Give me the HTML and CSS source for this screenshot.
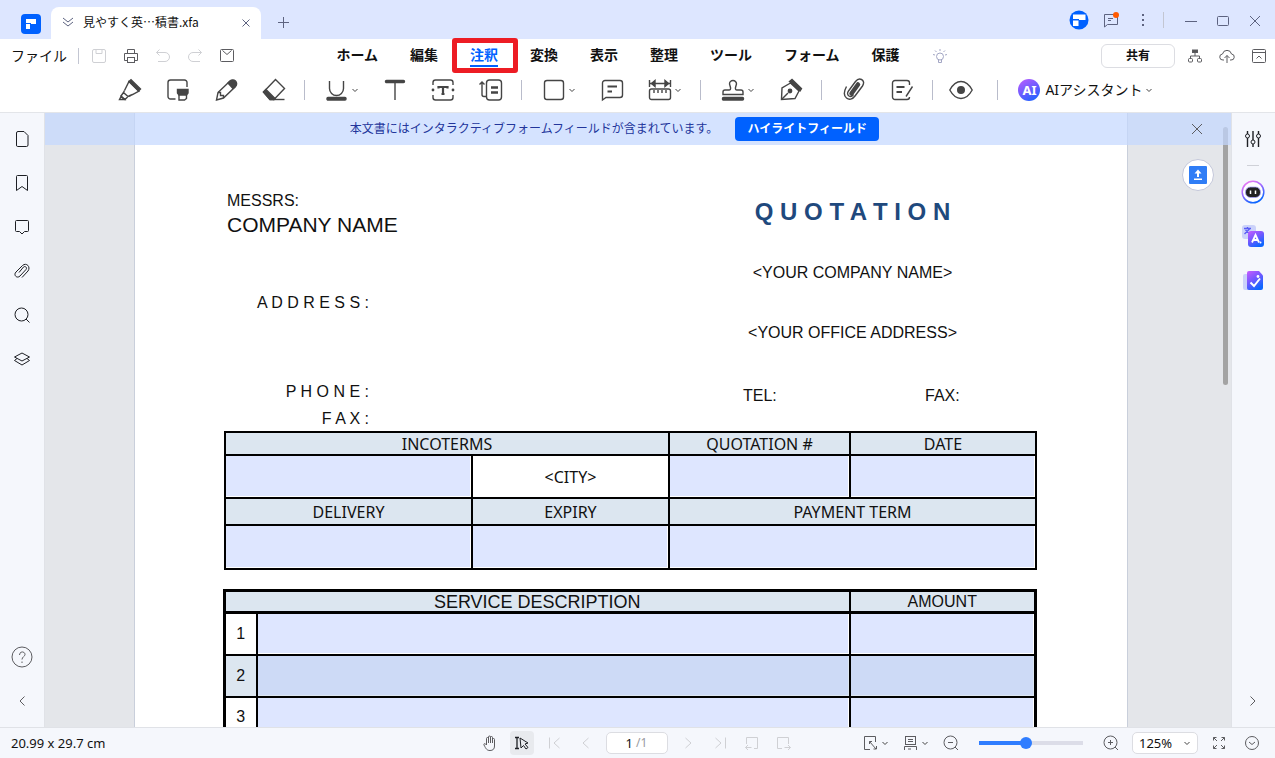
FILE: index.html
```html
<!DOCTYPE html>
<html lang="ja">
<head>
<meta charset="utf-8">
<meta name="viewport" content="width=device-width, initial-scale=1">
<title>見やすく英…積書.xfa</title>
<link rel="stylesheet" href="styles.css">
</head>
<body>
<svg class="sprite" aria-hidden="true">
  <defs>
    <linearGradient id="violet" x1="0" y1="0" x2="0.6" y2="1"><stop offset="0" stop-color="#c85cff"/><stop offset="0.5" stop-color="#7558ff"/><stop offset="1" stop-color="#0d66ff"/></linearGradient>
    <linearGradient id="ring" x1="0" y1="0" x2="0.5" y2="1"><stop offset="0" stop-color="#ff7df0"/><stop offset="0.5" stop-color="#a06aff"/><stop offset="1" stop-color="#0d66ff"/></linearGradient>
    <symbol id="chev" viewBox="0 0 8 8"><path d="M1.500 3 4 5.500 6.500 3"/></symbol>
  </defs>
</svg>

<header class="titlebar">
  <svg class="logo" viewBox="0 0 20 20"><rect width="20" height="20" rx="4" fill="#0061ff"/><path d="M5 5h10v5h-5v-1H5zM5 10h4v5H5z" fill="#fff"/></svg>
  <div class="tab">
    <svg class="ico16 slate" viewBox="0 0 16 16"><path d="M3 4l5 4 5-4M3 8l5 4 5-4"/></svg>
    <span class="tab-name">見やすく英…積書.xfa</span>
    <button class="tab-close" aria-label="閉じる"><svg class="ico16 slate" viewBox="0 0 16 16"><path d="M4.500 5.500l7 7M11.500 5.500l-7 7"/></svg></button>
  </div>
  <button class="newtab" aria-label="新しいタブ"><svg class="ico16 slate" viewBox="0 0 16 16"><path d="M7.500 3v11M2 8.500h11"/></svg></button>
  <div class="window-tools">
    <button aria-label="アカウント"><svg class="ico20" viewBox="0 0 20 20"><circle cx="10" cy="10" r="9.500" fill="#0061ff" stroke="none"/><path d="M4 4.500h12.500v5.500h-6.500V9H4zM4 10.500h5.500V16H4z" fill="#fff" stroke="none"/></svg></button>
    <button aria-label="メッセージ"><svg class="ico20 slate" viewBox="0 0 20 20"><path d="M3.500 4.500h13v10h-10l-3 2.500zM7 8.500h5M7 10.500h3"/><circle cx="15" cy="5" r="3" fill="#ff5a00" stroke="none"/></svg></button>
    <button aria-label="その他"><svg class="ico20" viewBox="0 0 20 20"><path d="M9 4h2v2H9zM9 9h2v2H9zM9 14h2v2H9z" fill="#5d6380" stroke="none"/></svg></button>
    <i class="vline"></i>
    <button aria-label="最小化"><svg class="ico20 slate" viewBox="0 0 20 20"><path d="M4 11.500h12"/></svg></button>
    <button aria-label="最大化"><svg class="ico20 slate" viewBox="0 0 20 20"><rect x="4.500" y="6.500" width="11" height="9" rx="1"/></svg></button>
    <button aria-label="閉じる"><svg class="ico20 slate" viewBox="0 0 20 20"><path d="M5 6l10 10M15 6 5 16"/></svg></button>
  </div>
</header>

<div class="menubar">
  <div class="quick">
    <button class="file">ファイル</button>
    <i class="vline"></i>
    <button aria-label="保存"><svg class="ico16 faint" viewBox="0 0 16 16"><rect x="1.500" y="1.500" width="13" height="13" rx="1.500"/><path d="M5 2v3.500h6V2"/></svg></button>
    <button aria-label="印刷"><svg class="ico16" viewBox="0 0 16 16"><path d="M4.500 5V1.500h7V5M4 12.500H1.500v-7h13v7H12"/><rect x="4.500" y="9.500" width="7" height="5"/></svg></button>
    <button aria-label="元に戻す"><svg class="ico16 faint" viewBox="0 0 16 16"><path d="M4.500 1.500l-3 3 3 3M1.500 4.500H10a4.500 4.500 0 0 1 0 9H3"/></svg></button>
    <button aria-label="やり直し"><svg class="ico16 faint" viewBox="0 0 16 16"><path d="M11.500 1.500l3 3-3 3M14.500 4.500H6a4.500 4.500 0 0 0 0 9h7"/></svg></button>
    <button aria-label="メール"><svg class="ico16" viewBox="0 0 16 16"><rect x="1.500" y="1.500" width="13" height="12" rx="1"/><path d="M3.500 2.500 8 6.500l4.500-4"/></svg></button>
  </div>
  <nav class="menu">
    <a href="#">ホーム</a><a href="#">編集</a><a href="#" class="active">注釈</a><a href="#">変換</a><a href="#">表示</a><a href="#">整理</a><a href="#">ツール</a><a href="#">フォーム</a><a href="#">保護</a>
    <button aria-label="ヒント"><svg class="ico16 bulb" viewBox="0 0 16 16"><circle cx="8" cy="8.500" r="3.500"/><path d="M6.500 11.500v3h3v-3M8 1v2M1 6.500l2 .5M15 6.500l-2 .5M3 2.500 4.500 4M13 2.500 11.500 4"/></svg></button>
  </nav>
  <div class="share-tools">
    <button class="share">共有</button>
    <button aria-label="構成"><svg class="ico16" viewBox="0 0 16 16"><rect x="5.500" y="2" width="5" height="2.500" fill="#555"/><path d="M8 5v3M3.500 10V8h9v2"/><rect x="1.500" y="10.500" width="4" height="3.500" rx="1"/><rect x="10.500" y="10.500" width="4" height="3.500" rx="1"/></svg></button>
    <button aria-label="アップロード"><svg class="ico16" viewBox="0 0 16 16"><path d="M5 12H4a3 3 0 0 1-.5-6 4.600 4.600 0 0 1 9 0 3 3 0 0 1-.5 6h-1M8 15V7.500M5.500 10 8 7.500l2.500 2.500"/></svg></button>
    <button aria-label="折りたたむ"><svg class="ico16" viewBox="0 0 16 16"><rect x="1.500" y="1.500" width="13" height="13" rx="1"/><path d="M1.500 4.500h13M5.500 10.500 8 8l2.500 2.500"/></svg></button>
  </div>
</div>

<div class="toolbar">
  <button aria-label="ハイライト"><svg class="ico24" viewBox="0 0 24 24"><path d="M6.500 12.500 11 3.500 21 13l-6.500 3.500-3.500 1.500"/><path d="M11 3.500 13 1.800 22.500 11l-2 2z" fill="#454545"/><path d="M6.500 12.500 5.500 14.500l4.500 4 2.500-1M5.500 14.500 3 18l4 3.500 3-3"/><path d="M3 18.500 1.500 21.500H6.500z"/></svg></button>
  <button aria-label="エリアハイライト"><svg class="ico24" viewBox="0 0 24 24"><path d="M9.500 21H4.500A2.500 2.500 0 0 1 2 18.500v-14A2.500 2.500 0 0 1 4.500 2h14A2.500 2.500 0 0 1 21 4.500V9"/><path d="M11.500 11.500h10.500v3.500l-1.500 2h-7.500l-1.500-2z" fill="#454545"/><path d="M13 17v5h5.500l2-1.500V17"/></svg></button>
  <button aria-label="鉛筆"><svg class="ico24" viewBox="0 0 24 24"><path d="M4 14.500 15.500 3.500a4 4 0 0 1 5.500 5.500L9.500 20 2.500 22z"/><path d="M14 5l2-2a3.800 3.800 0 0 1 5.500 5.500L19 10.500z" fill="#454545"/><path d="M4 14.500h2.500v3h3V20"/></svg></button>
  <button aria-label="消しゴム"><svg class="ico24" viewBox="0 0 24 24"><path d="M1.500 14 13.500 1.500l9 9L12 21.500H8z"/><path d="M1.500 14 4 11.500l9 9-1 1H8z" fill="#454545"/><path d="M11 21.500h11.500"/></svg></button>
  <i class="vline"></i>
  <button class="drop" aria-label="下線"><svg class="ico24" viewBox="0 0 24 24"><path d="M4.500 3v7.500a7 7 0 0 0 14 0V3"/><rect x="2" y="19.500" width="19" height="2.500" rx="1" fill="#454545"/></svg><svg class="chev"><use href="#chev"/></svg></button>
  <button aria-label="テキスト"><svg class="ico24" viewBox="0 0 24 24"><rect x="2.500" y="2.500" width="19" height="2" rx="1" fill="#454545"/><path d="M12 5v17"/></svg></button>
  <button aria-label="テキストボックス"><svg class="ico24" viewBox="0 0 24 24"><path d="M2 7V4.500A2.500 2.500 0 0 1 4.500 2h15A2.500 2.500 0 0 1 22 4.500V7M2 17v2.500A2.500 2.500 0 0 0 4.500 22h15a2.500 2.500 0 0 0 2.500-2.500V17"/><path d="M7.500 10.500V9h9v1.500M12 9v7M10.500 16h3" stroke-width="2.200"/><circle cx="2" cy="12" r=".7"/><circle cx="22" cy="12" r=".7"/></svg></button>
  <button aria-label="引き出し線"><svg class="ico24" viewBox="0 0 24 24"><rect x="7.500" y="2" width="15" height="20" rx="3"/><path d="M12 9.500h7M12 14.500h7" stroke-width="2.500"/><path d="M3 4v12.500a2 2 0 0 0 2 2h2M0.500 6.500 3 4l2.500 2.500"/></svg></button>
  <i class="vline"></i>
  <button class="drop" aria-label="図形"><svg class="ico24" viewBox="0 0 24 24"><rect x="2.500" y="2.500" width="19" height="19" rx="2.500"/></svg><svg class="chev"><use href="#chev"/></svg></button>
  <button aria-label="ノート"><svg class="ico24" viewBox="0 0 24 24"><path d="M2.500 22V5A2.500 2.500 0 0 1 5 2.500h15A2.500 2.500 0 0 1 22.500 5v12a2.500 2.500 0 0 1-2.500 2.500H6z"/><path d="M7.500 8.500h9.500M7.500 13.500h4.500" stroke-width="2.200"/></svg></button>
  <button class="drop" aria-label="計測"><svg class="ico24" viewBox="0 0 24 24"><rect x="1.500" y="11" width="21" height="10.500" rx="2"/><path d="M6 12v3M10 12v3M14 12v3M18 12v3M1.500 2v7M22.500 2v7M2 5.500h20"/><path d="M3.500 5.500 7 2.500v6zM20.500 5.500 17 2.500v6z" fill="#454545"/></svg><svg class="chev"><use href="#chev"/></svg></button>
  <i class="vline"></i>
  <button class="drop" aria-label="スタンプ"><svg class="ico24" viewBox="0 0 24 24"><path d="M2 16.500V14q0-2 2-2h4q2 0 1.500-2.500L8.500 6a3.500 3.500 0 1 1 7 0l-1 3.500Q14 12 16 12h4q2 0 2 2v2.500z"/><rect x="1.500" y="19.500" width="21" height="2.500" rx="1" fill="#454545"/></svg><svg class="chev"><use href="#chev"/></svg></button>
  <button aria-label="署名"><svg class="ico24" viewBox="0 0 24 24"><path d="M2.500 21.500 3 10l8.500-5L20 13l-4 7.500z"/><path d="M10.500 3.500 13 1.500 22.500 10.500 21 13z" fill="#454545"/><path d="M3 21l6-6"/><circle cx="11" cy="13" r="1.700" fill="#454545"/></svg></button>
  <i class="vline"></i>
  <button aria-label="添付"><svg class="ico24" viewBox="0 0 24 24"><path d="M4.500 8.500C1.500 14 2 18 4.500 20s6 1.500 8.500-2l7.500-10c2-3 1-5.500-1-6.500s-4-.5-6 2L6.500 13c-1.500 2-1 4 .5 5s3 .5 4.500-1.500"/><path d="M9.500 15.500l6.500-9" stroke-width="4.500" stroke-linecap="round"/></svg></button>
  <button aria-label="管理"><svg class="ico24" viewBox="0 0 24 24"><path d="M19.500 7V5A2.500 2.500 0 0 0 17 2.500H5A2.500 2.500 0 0 0 2.500 5v14A2.500 2.500 0 0 0 5 21.500h12a2.500 2.500 0 0 0 2.500-2.500M22.500 8.500 16 18.500"/><path d="M6.500 9h8M6.500 14h5.500" stroke-width="2.200"/></svg></button>
  <i class="vline"></i>
  <button class="view" aria-label="表示"><svg class="ico24" viewBox="0 0 24 24"><path d="M.8 12C3.800 6.500 8 3.500 12 3.500S20.200 6.500 23.200 12c-3 5.500-7.200 8.500-11.200 8.500S3.800 17.500.8 12z"/><circle cx="12" cy="12" r="3.300" fill="#454545"/></svg></button>
  <i class="vline"></i>
  <button class="ai"><span class="ai-badge">AI</span><span class="ai-name">AIアシスタント</span><svg class="chev"><use href="#chev"/></svg></button>
</div>

<div class="workspace">
  <aside class="rail">
    <button aria-label="ページ"><svg class="ico16 dark" viewBox="0 0 16 16"><path d="M4 .5h6l4 4V14q0 1.500-1.500 1.500h-9Q2.500 15.500 2.500 14V2Q2.500.5 4 .5z"/></svg></button>
    <button aria-label="しおり"><svg class="ico16 dark" viewBox="0 0 16 16"><path d="M2.500 15.500V1.500q0-1 1-1h9q1 0 1 1v14L8 11.500z"/></svg></button>
    <button aria-label="コメント"><svg class="ico16 dark" viewBox="0 0 16 16"><path d="M2.500 1.500h11q1 0 1 1v9q0 1-1 1h-3L8 15l-2.500-2.500h-3q-1 0-1-1v-9q0-1 1-1z"/></svg></button>
    <button aria-label="添付"><svg class="ico16 dark" viewBox="0 0 16 16"><path d="M8 14.500l6-6.500c3-4-1.500-9-5.500-5.500L2 9c-3 3 1 7 4 4l6-6.500c1.500-2-.8-3.800-2.500-2.500L5 9.500"/></svg></button>
    <button aria-label="検索"><svg class="ico16 dark" viewBox="0 0 16 16"><circle cx="7.500" cy="7.500" r="6.500"/><path d="M12 12l3.500 3.500"/></svg></button>
    <button aria-label="レイヤー"><svg class="ico16 dark" viewBox="0 0 16 16"><path d="M8 2l7.500 4L8 10 .5 6zM3 7.500.5 9.500 8 14l7.500-4.500-2.500-2"/></svg></button>
    <span class="grow"></span>
    <button class="help" aria-label="ヘルプ"><svg class="ico22" viewBox="0 0 22 22"><circle cx="11" cy="11" r="10"/><path d="M8.500 9c0-4 5.500-4 5.500-.5 0 2-3 2.300-3 5M11 15.500v1.500"/></svg></button>
    <button aria-label="折りたたむ"><svg class="ico16" viewBox="0 0 16 16"><path d="M10.500 3.500 6 8l4.500 4.500"/></svg></button>
  </aside>

  <main class="viewer">
    <div class="banner">
      <span>本文書にはインタラクティブフォームフィールドが含まれています。</span>
      <button class="highlight">ハイライトフィールド</button>
      <button class="banner-close" aria-label="閉じる"><svg class="ico16" viewBox="0 0 16 16"><path d="M3 3l10 10M13 3 3 13"/></svg></button>
    </div>
    <span class="thumb"></span>
    <button class="upload" aria-label="アップロード"><svg viewBox="0 0 18 18"><rect width="18" height="18" rx="1" fill="#2f7df6"/><path d="M9 3.500 5.500 7.500H8V11h2V7.500h2.500zM5 12.500h8V14H5z" fill="#fff"/></svg></button>

    <article class="page">
      <section class="heading">
        <div class="client">
          <p class="messrs">MESSRS:</p>
          <p class="company">COMPANY NAME</p>
          <p class="label address">A D D R E S S :</p>
          <p class="label phone">P H O N E :</p>
          <p class="label fax">F A X :</p>
        </div>
        <div class="issuer">
          <h1>Q U O T A T I O N</h1>
          <p class="own-name">&lt;YOUR COMPANY NAME&gt;</p>
          <p class="own-address">&lt;YOUR OFFICE ADDRESS&gt;</p>
          <p class="contact"><span>TEL:</span><span>FAX:</span></p>
        </div>
      </section>

      <table class="terms">
        <colgroup><col class="c1"><col class="c2"><col class="c3"><col></colgroup>
        <tr class="h1"><th colspan="2">INCOTERMS</th><th>QUOTATION #</th><th>DATE</th></tr>
        <tr class="f1"><td><input aria-label="Incoterms"></td><td class="plain">&lt;CITY&gt;</td><td><input aria-label="Quotation number"></td><td><input aria-label="Date"></td></tr>
        <tr class="h2"><th>DELIVERY</th><th>EXPIRY</th><th colspan="2">PAYMENT TERM</th></tr>
        <tr class="f2"><td><input aria-label="Delivery"></td><td><input aria-label="Expiry"></td><td colspan="2"><input aria-label="Payment term"></td></tr>
      </table>

      <table class="services">
        <colgroup><col class="num"><col><col class="amount"></colgroup>
        <tr class="head"><th colspan="2" class="desc">SERVICE DESCRIPTION</th><th>AMOUNT</th></tr>
        <tr><td class="plain">1</td><td><input aria-label="Service 1"></td><td><input aria-label="Amount 1"></td></tr>
        <tr class="alt"><td class="plain">2</td><td><input aria-label="Service 2"></td><td><input aria-label="Amount 2"></td></tr>
        <tr><td class="plain">3</td><td><input aria-label="Service 3"></td><td><input aria-label="Amount 3"></td></tr>
      </table>
    </article>
  </main>

  <aside class="rail right">
    <button aria-label="設定"><svg class="ico16 dark" viewBox="0 0 16 16"><path d="M2.500 0v3M2.500 7v9M8 0v9M8 13v3M13.500 0v3M13.500 7v9" stroke-width="1.400"/><circle cx="2.500" cy="5" r="2"/><circle cx="8" cy="11" r="2"/><circle cx="13.500" cy="5" r="2"/></svg></button>
    <i class="hline"></i>
    <button aria-label="AI"><svg class="ico24" viewBox="0 0 24 24"><circle cx="12" cy="12" r="10.800" fill="#fff" stroke="url(#ring)" stroke-width="1.500"/><rect x="4.500" y="7" width="15" height="10.500" rx="5" fill="#222" stroke="#a9a5ff" stroke-width=".8"/><path d="M9.500 10.500v3.500M14.500 10.500v3.500" stroke="#fff" stroke-width="1.500"/></svg></button>
    <button aria-label="翻訳"><svg class="ico24" viewBox="0 0 24 24"><rect x="1" y="1" width="14" height="14" rx="3" fill="#cbd2fa" stroke="none"/><path d="M3 4.500h7M6.500 3v1.500M8.500 5 3.500 10M4.500 6l4 3.500" stroke="#5a5cf5"/><rect x="7" y="7" width="16" height="16" rx="3" fill="url(#violet)" stroke="none"/><path d="M11 18.500 14.500 11 18 18.500M12.500 16h4" stroke="#fff" stroke-width="1.800"/><circle cx="19.500" cy="18.500" r="1" fill="#fff" stroke="none"/></svg></button>
    <button aria-label="校正"><svg class="ico24" viewBox="0 0 24 24"><rect x="2" y="6" width="10" height="16" rx="2" fill="#cbd2fa" stroke="none"/><path d="M8 3h10l4 4.500V20q0 2-2 2H8q-2 0-2-2V5q0-2 2-2z" fill="url(#violet)" stroke="none"/><path d="M9.500 14.500l3.500 3.500 6-7.500" stroke="#fff" stroke-width="2"/><circle cx="17" cy="8.500" r="1.400" fill="#fff" stroke="none"/></svg></button>
    <span class="grow"></span>
    <button aria-label="展開"><svg class="ico16" viewBox="0 0 16 16"><path d="M5.500 3.500 10 8l-4.500 4.500"/></svg></button>
  </aside>
</div>

<footer class="status">
  <span class="size">20.99 x 29.7 cm</span>
  <div class="pager">
    <button aria-label="手のひら"><svg class="ico16" viewBox="0 0 16 16"><path d="M4.500 10V3.500a1 1 0 0 1 2 0V8V2a1 1 0 0 1 2 0v6V2.500a1 1 0 0 1 2 0V8V4.500a1 1 0 0 1 2 0V11c0 3-1.500 4.500-4.500 4.500-3 0-4-1.500-6-5.500-.5-1.500 1-2 2-.5z"/></svg></button>
    <button class="on" aria-label="選択"><svg class="ico16 dark" viewBox="0 0 16 16"><path d="M1 2.500h4M3 2.500v11M1 13.500h4" stroke-width="1.300"/><path d="M6 3l8 5-3 1 3 3.500-2 1.500-2.500-3.500L7 13z"/></svg></button>
    <button aria-label="最初"><svg class="ico16 faint" viewBox="0 0 16 16"><path d="M3.500 2.500v11M13.500 3 8 8l5.500 5"/></svg></button>
    <button aria-label="前へ"><svg class="ico16 faint" viewBox="0 0 16 16"><path d="M10.500 3 5 8l5.500 5"/></svg></button>
    <label class="pagebox"><input value="1" aria-label="ページ番号"><span>/1</span></label>
    <button aria-label="次へ"><svg class="ico16 faint" viewBox="0 0 16 16"><path d="M5.500 3 11 8l-5.500 5"/></svg></button>
    <button aria-label="最後"><svg class="ico16 faint" viewBox="0 0 16 16"><path d="M13.500 2.500v11M3.500 3 9 8l-5.500 5"/></svg></button>
    <button aria-label="前の表示"><svg class="ico16 faint" viewBox="0 0 16 16"><path d="M2.500 9V2.500h11v11H10M7.500 12.500H1.500M4 10l-2.500 2.500L4 15"/></svg></button>
    <button aria-label="次の表示"><svg class="ico16 faint" viewBox="0 0 16 16"><path d="M12.500 9V2.500h-11v11H6M8.500 12.500h6M12 10l2.500 2.500L12 15"/></svg></button>
  </div>
  <div class="zoom">
    <button class="duo" aria-label="ページ合わせ"><svg class="ico16" viewBox="0 0 16 16"><path d="M12.500 7V1.500h-11v13H7M6.500 9V6.500H9M6.500 6.500l6.500 7.500M13.500 11v3h-3"/></svg><svg class="chev"><use href="#chev"/></svg></button>
    <button class="duo" aria-label="表示モード"><svg class="ico16" viewBox="0 0 16 16"><rect x="2.500" y="1.500" width="10" height="8"/><path d="M5 4.500h5M5 6.500h5M1.500 15v-3.500h12V15M5 14h3"/></svg><svg class="chev"><use href="#chev"/></svg></button>
    <button aria-label="縮小"><svg class="ico16" viewBox="0 0 16 16"><circle cx="7.500" cy="7.500" r="6.500"/><path d="M5 7.500h5M12 12l3 3"/></svg></button>
    <input type="range" min="0" max="100" value="45" aria-label="ズーム">
    <button aria-label="拡大"><svg class="ico16" viewBox="0 0 16 16"><circle cx="7.500" cy="7.500" r="6.500"/><path d="M5 7.500h5M7.500 5v5M12 12l3 3"/></svg></button>
    <span class="level"><select aria-label="倍率"><option>125%</option></select><svg class="chev"><use href="#chev"/></svg></span>
    <button aria-label="全画面"><svg class="ico16" viewBox="0 0 16 16"><path d="M6 6 2.500 2.500M2.500 5.500v-3h3M10 6l3.500-3.500M10.500 2.500h3v3M6 10l-3.500 3.500M2.500 10.500v3h3M10 10l3.500 3.500M10.500 13.500h3v-3"/></svg></button>
    <button class="last" aria-label="メニュー"><svg class="ico16" viewBox="0 0 16 16"><circle cx="8" cy="8" r="6.500"/><path d="M5 7l3 2.500L11 7"/></svg></button>
  </div>
</footer>
</body>
</html>
```
FILE: styles.css
```css
* { box-sizing: border-box; }

body {
  margin: 0;
  height: 100vh;
  display: flex;
  flex-direction: column;
  overflow: hidden;
  background: #fff;
  color: #111;
  font: 14px/20px "Noto Sans", "Noto Sans CJK JP", sans-serif;
}

button {
  display: inline-flex;
  align-items: center;
  justify-content: center;
  flex: none;
  margin: 0;
  padding: 0;
  border: 0;
  background: none;
  color: inherit;
  font: inherit;
}

input, select { font: inherit; color: inherit; }
p, h1 { margin: 0; }

.sprite { position: absolute; width: 0; height: 0; }
svg { flex: none; display: block; }

.ico16, .ico20, .ico22, .ico24, .chev {
  fill: none;
  stroke: #5c5c60;
  stroke-width: 1;
}
.ico16 { width: 16px; height: 16px; }
.ico20 { width: 20px; height: 20px; }
.ico22 { width: 22px; height: 22px; }
.ico24 { width: 24px; height: 24px; stroke: #454545; stroke-width: 1.4; }
.chev { width: 8px; height: 8px; stroke: #444; }
.dark { stroke: #1d1f24; }
.faint { stroke: #cfd0d4; }
.slate { stroke: #5d6380; }
.bulb { stroke: #a3a6c4; }
.grow { flex: 1; }

.vline { flex: none; width: 1px; height: 16px; background: #c3c6d2; }
.hline { flex: none; width: 12px; height: 1px; margin: 4px 0; background: #cfd1d8; }

/* Title bar */
.titlebar {
  flex: none;
  height: 39px;
  display: flex;
  align-items: center;
  padding: 7px 10px 0 21px;
  background: #dde6ff;
}
.logo { width: 20px; height: 20px; margin: 1px 10px 0 0; }
.tab {
  width: 210px;
  height: 32px;
  display: flex;
  align-items: center;
  padding: 0 7px 2px 9px;
  border-radius: 8px 8px 0 0;
  background: #fff;
}
.tab-name {
  flex: 1;
  padding-left: 7px;
  font-family: "Noto Sans CJK JP", "Noto Sans", sans-serif;
  font-size: 12px;
}
.newtab { margin: 0 0 2px 15px; }
.window-tools {
  margin-left: auto;
  display: flex;
  align-items: center;
  gap: 12px;
  padding-bottom: 6px;
}
.window-tools .vline { margin: 0 5px 0 -2px; }

/* Menu bar */
.menubar {
  flex: none;
  height: 34px;
  display: flex;
  align-items: center;
  padding: 0 8px 0 11px;
}
.quick, .share-tools { flex: 1 1 0; display: flex; align-items: center; gap: 16px; }
.quick .vline { margin: 0 -4px 0 -5px; }
.share-tools { justify-content: flex-end; }
.share-tools .share { margin-right: -4px; }
.share {
  width: 74px;
  height: 24px;
  border: 1px solid #dcdde2;
  border-radius: 6px;
  background: #fff;
  font-size: 12px;
  font-weight: 700;
}
.menu { display: flex; align-items: center; gap: 32px; padding-left: 6px; }
.menu a {
  position: relative;
  border-bottom: 2px solid transparent;
  color: #111;
  font-weight: 700;
  text-decoration: none;
}
.menu .active { color: #0061ff; border-bottom-color: #0061ff; }
.menu .active::after {
  content: "";
  position: absolute;
  inset: -7px -20px -8px -18px;
  border: 5px solid #ed1c24;
  border-radius: 3px;
}

/* Annotation tools */
.toolbar {
  flex: none;
  height: 40px;
  display: flex;
  justify-content: center;
  align-items: center;
  gap: 24px;
  padding: 0 4px 5px 0;
  border-bottom: 1px solid #e3e5e9;
}
.toolbar .vline { height: 20px; margin: 0 -4px 0 -6px; background: #b9bccb; }
.toolbar .view { margin: 0 6px 0 -4px; }
.toolbar .chev { margin-left: 2px; }
.ai-badge {
  width: 22px;
  height: 22px;
  margin-right: 5px;
  border-radius: 11px;
  background: linear-gradient(150deg, #c05cff, #6a5cff 50%, #0d66ff);
  color: #fff;
  font: 700 13px/22px "Noto Sans", sans-serif;
}

/* Workspace */
.workspace { flex: 1; min-height: 0; display: flex; }
.rail {
  flex: none;
  width: 45px;
  display: flex;
  flex-direction: column;
  align-items: center;
  padding: 4px 0;
  border-right: 1px solid #e0e2e7;
  background: #f5f7fc;
}
.rail.right { width: 44px; padding-right: 1px; border-right: 0; border-left: 1px solid #e0e2e7; }
.rail button { width: 42px; height: 44px; }

.viewer {
  position: relative;
  flex: 1;
  min-width: 0;
  overflow: hidden;
  padding: 0 103px 0 89px;
  background: #e4e6ea;
}
.banner {
  position: absolute;
  z-index: 3;
  inset: 0 0 auto 0;
  height: 32px;
  display: flex;
  align-items: center;
  justify-content: center;
  gap: 17px;
  padding-right: 47px;
  background: rgba(195, 215, 255, 0.7);
  color: #22359b;
  font-size: 12px;
}
.highlight {
  width: 144px;
  height: 24px;
  border-radius: 4px;
  background: #0061ff;
  color: #fff;
  font-weight: 700;
}
.banner-close { position: absolute; right: 26px; top: 8px; }
.thumb {
  position: absolute;
  right: 3px;
  top: 14px;
  width: 5px;
  height: 258px;
  border-radius: 3px;
  background: #a3a3a3;
}
.upload {
  position: absolute;
  right: 17px;
  top: 46px;
  width: 32px;
  height: 32px;
  border: 1px solid #c4c8da;
  border-radius: 16px;
  background: #fff;
}
.upload svg { width: 18px; height: 18px; }

/* Document */
.page {
  min-height: 100%;
  padding: 76px 90px 0 88px;
  border: solid #c9cfdb;
  border-width: 0 1px;
  background: #fff;
  color: #111;
  font: 16px/24px "Liberation Sans", Arial, sans-serif;
}
.heading { display: grid; grid-template-columns: 1fr 369px; }
.client { padding-left: 4px; }
.company { font-size: 21px; }
.label { width: 142px; text-align: right; }
.address { margin-top: 54px; }
.phone { margin-top: 65px; }
.fax { margin-top: 3px; }
.issuer { text-align: center; padding-top: 8px; }
.issuer h1 { color: #1f497d; font-size: 24px; line-height: 30px; }
.own-name { margin-top: 34px; }
.own-address { margin-top: 36px; }
.contact {
  display: grid;
  grid-template-columns: 182px 1fr;
  margin-top: 39px;
  padding-left: 75px;
  text-align: left;
}

table { width: 100%; table-layout: fixed; border-collapse: collapse; }
th, td { padding: 0; border: 2px solid #000; font-weight: 400; text-align: center; }
th { background: #dce6f0; }
td { vertical-align: top; }
td.plain { vertical-align: middle; }
td input {
  display: block;
  width: calc(100% - 1px);
  height: 40px;
  padding: 0 4px;
  border: 0;
  border-radius: 0;
  background: #dee6ff;
}

.terms {
  width: calc(100% - 1px);
  margin-left: 1px;
  font-family: "Noto Sans", sans-serif;
  line-height: 20px;
}
.terms .c1 { width: 247px; }
.terms .c2 { width: 197px; }
.terms .c3 { width: 181px; }
.h1 { height: 23px; }
.f1 { height: 43px; }
.h2 { height: 27px; }
.f2 { height: 44px; }
.f2 input { height: 41px; }

.services { margin-top: 19px; border: 3px solid #000; line-height: 18px; }
.services .num { width: 32px; }
.services .amount { width: 186px; }
.services tr { height: 42px; }
.services .head { height: 22px; }
.services .head th { border-top-width: 3px; border-bottom-width: 3px; }
.services .desc { font-size: 18px; }
.services input { height: 39px; }
.alt td { background: #dce6f0; }
.alt input { background: #cddaf6; }

/* Status bar */
.status {
  flex: none;
  height: 31px;
  display: grid;
  grid-template-columns: 1fr auto 1fr;
  align-items: center;
  padding: 0 15px 0 11px;
  border-top: 1px solid #e0e2e7;
  background: #f5f7fc;
  font-size: 13px;
}
.pager { display: flex; align-items: center; gap: 8px; padding-left: 3px; }
.pager button { width: 24px; height: 24px; border-radius: 4px; }
.pager .on { background: #e8eaee; }
.pagebox {
  width: 62px;
  height: 22px;
  display: flex;
  align-items: center;
  border: 1px solid #dcdde2;
  border-radius: 5px;
  background: #fff;
}
.pagebox input {
  width: 26px;
  padding: 0;
  border: 0;
  background: none;
  text-align: right;
}
.pagebox span { padding-left: 3px; color: #9a9ba0; font-size: 12px; }

.zoom { display: flex; align-items: center; justify-content: flex-end; }
.duo { margin-right: 14px; }
.duo .chev { margin-left: 2px; }
.zoom input {
  width: 104px;
  height: 12px;
  margin: 0 20px;
  appearance: none;
  background: linear-gradient(90deg, #2f7dff 45%, #dcdde8 45%) center / 100% 4px no-repeat;
}
.zoom input::-webkit-slider-thumb {
  appearance: none;
  width: 12px;
  height: 12px;
  border-radius: 6px;
  background: #2f7dff;
}
.level { position: relative; margin: 0 13px; }
.level select {
  display: block;
  width: 66px;
  height: 22px;
  padding: 0 6px;
  border: 1px solid #dcdde2;
  border-radius: 5px;
  appearance: none;
  background: #fff;
}
.level .chev { position: absolute; right: 7px; top: 7px; }
.zoom .last { margin-left: 17px; }
```
